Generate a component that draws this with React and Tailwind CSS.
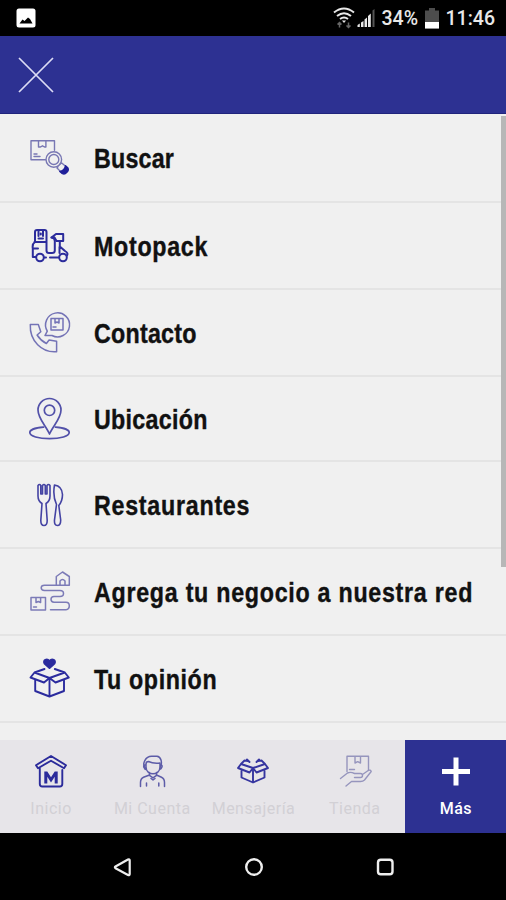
import React from 'react';
import { clsx } from 'clsx';

// Shared wrapper for the line icons of the menu list
const MenuIcon = ({ children, stroke = 1.2, className = 'text-[#3a3aa0]' }) => (
    <svg
        viewBox="0 0 44 44"
        className={clsx('size-11 shrink-0', className)}
        fill="none"
        stroke="currentColor"
        strokeWidth={stroke}
        strokeLinecap="round"
        strokeLinejoin="round"
    >
        {children}
    </svg>
);

const TabIcon = ({ children, stroke = 1.5, className = 'text-[#2b2b9b]' }) => (
    <svg
        viewBox="0 0 36 36"
        className={clsx('size-9', className)}
        fill="none"
        stroke="currentColor"
        strokeWidth={stroke}
        strokeLinecap="round"
        strokeLinejoin="round"
    >
        {children}
    </svg>
);

const SearchBoxIcon = () => (
    <MenuIcon stroke={1.4} className="text-[#7877b3]">
        <path d="M17.500 23.800H3V4.800h23.500v9.500M10.500 5v6h2l2-1.200 2 1.200h1.400V5M6 20.500h6M6 18h3" />
        <circle cx="25.800" cy="23.500" r="7.800" />
        <circle cx="25.800" cy="23.500" r="5" />
        <path d="M31.500 28.500l2.200-1.500 6 5M30 30.500l-1 1.500 5 5" />
        <path className="text-[#20209a]" stroke="currentColor" fill="currentColor" d="M37.500 29.800l2.400 2.300c1.600 2.500-2.500 7-5.400 5.500l-2.700-2.200c2.700-.5 5-2.600 5.700-5.600z" />
    </MenuIcon>
);

const ScooterIcon = () => (
    <MenuIcon stroke={2} className="text-[#2c2c9c]">
        <path d="M7 17V8Q7 6 9 6H16.500Q18.500 6 18.500 8V17M10.500 6.500v5.500M15 6.500v5.500M12.800 9.500v1M10.500 14.500h4.500" />
        <path d="M6.500 18H18.500V26.500Q18.500 29 21 29H24Q26.800 29 26.800 26.500V17Q26.800 13.500 23.500 13.500" />
        <path d="M8 33H4.800V24.500Q4 20 7 18M16.500 33.500H18M22 33.500H30.500M4.800 24.500H10" />
        <path d="M23.500 13.500L28 10h7.200v7H28.500l-2-3.500zM31.800 17V22.500L37 27Q40.500 29 39 31.500M31.500 23v6" />
        <circle cx="12" cy="33.500" r="3.800" />
        <circle cx="35" cy="33.500" r="3.800" />
    </MenuIcon>
);

const ContactIcon = () => (
    <MenuIcon stroke={1.5} className="text-[#7473b6]">
        <path d="M17 24.500l2.300-4.400A12 12 0 1 1 24 24.500z" />
        <path d="M23 7.500H35v11.500H23zM27 7.500v4.500l2-1 2 1V7.500M25 16h3" />
        <path d="M2.300 13.500h8l2.500 7.300-3.700 3.200q3.400 5.500 9.300 8.500l2.700-3.500 7.500 1.200v10.500C14 42 1.500 30 2.300 13.500z" />
    </MenuIcon>
);

const LocationIcon = () => (
    <MenuIcon stroke={1.700} className="text-[#5251a9]">
        <path d="M21.500 37C18 29 10 21.500 10 13a11.500 11.500 0 0 1 23 0c0 8.500-8 16-11.500 24z" />
        <circle cx="21.500" cy="13.300" r="5.200" />
        <path d="M15.500 30.200C7 30.800 1.800 33 1.800 35.500c0 3.600 8.800 6.200 19.700 6.200s19.700-2.600 19.700-6.200c0-2.500-5.200-4.700-13.700-5.300" />
    </MenuIcon>
);

const CutleryIcon = () => (
    <MenuIcon stroke={1.600} className="text-[#4443a3]">
        <path d="M10 2.500q1.500-2 2.800 0v8.500h1.700V2.500q1.500-2 2.800 0v8.500H19V2.500q1.500-2 3 0V13q0 5-4 7.500l1.200 17q0 5-3.200 5t-3.200-5l1.200-17Q10 18 10 13z" />
        <path d="M26.500 2Q34 3 34.500 11.500q0 6.500-3.700 11l1.900 14.500q0 5.500-3.300 5.500T26.500 37l2-15.500q-4-8.500-2-19.500z" />
    </MenuIcon>
);

const RouteIcon = () => (
    <MenuIcon stroke={1.5} className="text-[#7c7bb7]">
        <path d="M28.300 15.200V6.500L34.500 2l6.800 4.500v8.700zM32 15v-4q2.500-3 5 0v4" />
        <path d="M28 15.200H16.500q-3.300 0-3.300 2.600t3.300 2.600H32q3.500 0 3.500 3t-3.500 3H26q-3 0-3 2.900t3 2.900H38q3.300 0 3.300 3.600T38 39.800H22.500" />
        <path d="M3 27.500H17.500V40H3zM8 27.500v5l2.300-1 2.300 1v-5M5.500 37h3" />
    </MenuIcon>
);

const OpinionIcon = () => (
    <MenuIcon stroke={1.900} className="text-[#2b2b9e]">
        <path fill="currentColor" d="M21.500 11l-5-4.500c-2-3.500 2.500-5.500 5-2.500 2.500-3 7-1 5 2.500z" />
        <path d="M16.500 12L6.500 15.500 2.500 20.500 16 25.500 21.500 21 27.500 25.500 40.800 20.500 36.800 15.500 26.800 12M6.500 15.500L21.500 21 36.800 15.500" />
        <path d="M7.200 23.500V34L21.500 39.500 36 34V23.500M21.500 22.500V39" />
    </MenuIcon>
);

const HomeIcon = () => (
    <TabIcon stroke={1.900}>
        <path d="M18 3L3 12.200l2 3L18 7.700l13 7.500 2-3z" />
        <path d="M6.800 15.500V31q0 2.500 2.500 2.500h17.500Q29.300 33.500 29.300 31V17" />
        <path
            fill="currentColor"
            stroke="none"
            d="M11.300 30.500V18.500h3L18 24.300l3.700-5.800h3v12h-3v-6.700L18 29.500l-3.700-5.700v6.700z"
        />
    </TabIcon>
);

const AccountIcon = () => (
    <TabIcon stroke={1.500} className="text-[#5d5ca8]">
        <path d="M11.500 15c-4-4 0-12 6.500-11.700h5c4 .3 5.500 6 3.500 10.700" />
        <path d="M12 11q0-2.500 2.500-2.500c4 2 7 2 11.500 1.500V14c0 9-14 9-14 0zM11 12c-2.500 0-1 4.500 1.500 4.500M27 12c2 0 1 4-1.500 4.500" />
        <path d="M15.500 19.500v2.800l3.500 2.500 3.500-2.500v-2.800M15.500 22l-6 2.200q-3 1.300-3 5.300v4M22.500 22l5 2.200q3 1.300 3 5.300v4M17 25.500l2 1.500 2-1.500M12.500 30v3M24.800 30v3" />
    </TabIcon>
);

const OpenBoxIcon = () => (
    <TabIcon stroke={1.900} className="text-[#3635a0]">
        <path d="M6 11L3 15l11.500 4.500L18 15l3.500 4.500L33 15l-3-4M6 11l12 4 12-4M13 8L9.500 7.500 6 11 M23 8l3.500-.5L30 11M12 6.500L14.500 9M24 6.500L21.500 9" />
        <path d="M6.500 18v6.500L18 29.500l11.500-5V18M18 15v14" />
    </TabIcon>
);

const StoreIcon = () => (
    <TabIcon stroke={1.400} className="text-[#9695bd]">
        <path d="M10 18.500V3.300h21.500v13.500M18 3.500v6.500l2.700-1.300L23.500 10V3.500M12.500 16.500h5" />
        <path d="M3.500 25.500l7-5.500q3-1.500 7 .5h6q2 0 2 2t-2 2h-6M25.500 21.500l5.700-4q2.500-1.200 3 1L27.500 27q-1.500 1.500-4 1.500H14.500L9 33" />
    </TabIcon>
);

const PlusIcon = () => (
    <TabIcon stroke={5} className="text-white">
        <path strokeLinecap="butt" d="M18 4.500v28M4 18.500h28" />
    </TabIcon>
);

const menuItems = [
    { label: 'Buscar', icon: SearchBoxIcon, row: 'h-[89px]', tracking: 'tracking-[0.25px]' },
    { label: 'Motopack', icon: ScooterIcon, row: 'h-[87px]', tracking: 'tracking-[0.85px]' },
    { label: 'Contacto', icon: ContactIcon, row: 'h-[87px]', tracking: 'tracking-[0.3px]' },
    { label: 'Ubicación', icon: LocationIcon, row: 'h-[85px]', tracking: 'tracking-[0.35px]' },
    { label: 'Restaurantes', icon: CutleryIcon, row: 'h-[87px]', tracking: 'tracking-[0.9px]' },
    { label: 'Agrega tu negocio a nuestra red', icon: RouteIcon, row: 'h-[87px]', tracking: 'tracking-[0.88px]' },
    { label: 'Tu opinión', icon: OpinionIcon, row: 'h-[87px]', tracking: 'tracking-[0.75px]' },
];

const tabs = [
    { label: 'Inicio', icon: HomeIcon },
    { label: 'Mi Cuenta', icon: AccountIcon },
    { label: 'Mensajería', icon: OpenBoxIcon },
    { label: 'Tienda', icon: StoreIcon },
    { label: 'Más', icon: PlusIcon, active: true },
];

const StatusBar = () => (
    <div className="flex h-9 items-center bg-black pr-[11px] pl-4 text-[#e8e8e8]">
        <svg viewBox="0 0 20 20" className="size-5">
            <rect x=".5" y=".5" width="19" height="19" rx="2.500" fill="white" />
            <path d="M3.500 15.500l3-4 2 1.500 3.500-3.500 2 1.500 2.500 4.500z" fill="black" />
        </svg>
        <svg viewBox="0 0 22 22" className="ml-auto size-[22px]" fill="none" stroke="currentColor" strokeWidth="2">
            <path d="M1 5.500q10-8 20 0M4 9q7-5.500 14 0M7 12q4-3 8 0" />
            <path d="M9 13.500h4l-2 2.500z" fill="currentColor" stroke="none" />
            <path d="M6.500 20.500v-5m-2 2l2-2 2 2M15.500 15.500v5m-2-2l2 2 2-2" stroke="#666" strokeWidth="1.500" />
        </svg>
        <svg viewBox="0 0 19 20" className="ml-0.5 h-5 w-[19px]" fill="currentColor">
            <path d="M.5 19v-2l2.300-1.500V19zM4 19v-4.500L6.500 13v6zM7.500 19v-7.500l2.500-2V19zM11 19V8l2.800-2.500V19z" />
            <path d="M15.500 19V2.500l2-1.500v18z" fill="#555" />
        </svg>
        <span className="mt-0.5 ml-1.5 w-[37px] text-[19.5px] leading-none font-medium">34%</span>
        <svg viewBox="0 0 14 21" className="ml-1.5 h-[21px] w-3.5">
            <path d="M0 2.500h4V0h6v2.500h4V20.500H0z" fill="#4d4d4d" />
            <path d="M0 14h14v6.500H0z" fill="white" />
        </svg>
        <span className="mt-0.5 ml-[7px] text-[19.5px] leading-none font-medium">11:46</span>
    </div>
);

const NavigationBar = () => (
    <div className="flex h-[67px] items-center justify-center gap-[107px] bg-black pl-px text-[#eee]">
        <svg viewBox="0 0 24 24" className="size-6" fill="none" stroke="currentColor" strokeWidth="2.200" strokeLinejoin="round">
            <path d="M4.500 11.500Q3.300 12.300 4.500 13.200L17 20q1.700.5 1.700-1V5.500q0-1.500-1.700-1z" />
        </svg>
        <svg viewBox="0 0 24 24" className="size-6" fill="none" stroke="currentColor" strokeWidth="2.400">
            <circle cx="12" cy="12" r="7.800" />
        </svg>
        <svg viewBox="0 0 24 24" className="size-6" fill="none" stroke="currentColor" strokeWidth="2.400">
            <rect x="5" y="4.800" width="14.500" height="14.500" rx="2.800" />
        </svg>
    </div>
);

const App = () => {
    return (
        <div className="flex h-[900px] w-[506px] flex-col overflow-hidden bg-[#f0f0f0] font-[Roboto,sans-serif]">
            <StatusBar />

            <header className="flex h-[78px] items-center border-b border-[#20247c] bg-[#2d3192] pl-[17px]">
                <button aria-label="Cerrar">
                    <svg viewBox="0 0 38 38" className="size-[38px]" fill="none" stroke="#dcdcf5" strokeWidth="1.700">
                        <path d="M2 2l34 34M36 2L2 36" />
                    </svg>
                </button>
            </header>

            <main className="relative h-[626px] overflow-hidden">
                <ul>
                    {menuItems.map(({ label, icon: Icon, row, tracking }) => (
                        <li key={label} className={clsx('flex items-center border-b-2 border-[#e4e4e4] pl-7', row)}>
                            <Icon />
                            <span
                                className={clsx(
                                    "mt-0.5 ml-[22px] w-0 origin-left scale-x-[0.83] font-['Liberation_Sans',Arial,sans-serif] text-[28px] font-bold whitespace-nowrap text-[#111] [-webkit-text-stroke:0.4px_#111]",
                                    tracking
                                )}
                            >
                                {label}
                            </span>
                        </li>
                    ))}
                </ul>
                {/* scroll position */}
                <div className="absolute top-0.5 right-0 h-[451px] w-[5px] bg-[#b7b7b7]" />
            </main>

            <nav className="grid h-[93px] grid-cols-5 bg-[#e7e5e9]">
                {tabs.map(({ label, icon: Icon, active }) => (
                    <button
                        key={label}
                        className={clsx(
                            'flex flex-col items-center pt-[13px] pl-px text-[16px]',
                            active ? 'bg-[#2d3192] font-medium text-white' : 'text-[#d2d0d5]'
                        )}
                    >
                        <Icon />
                        <span className="mt-2 tracking-[0.5px] whitespace-nowrap">{label}</span>
                    </button>
                ))}
            </nav>

            <NavigationBar />
        </div>
    );
};

export default App;
